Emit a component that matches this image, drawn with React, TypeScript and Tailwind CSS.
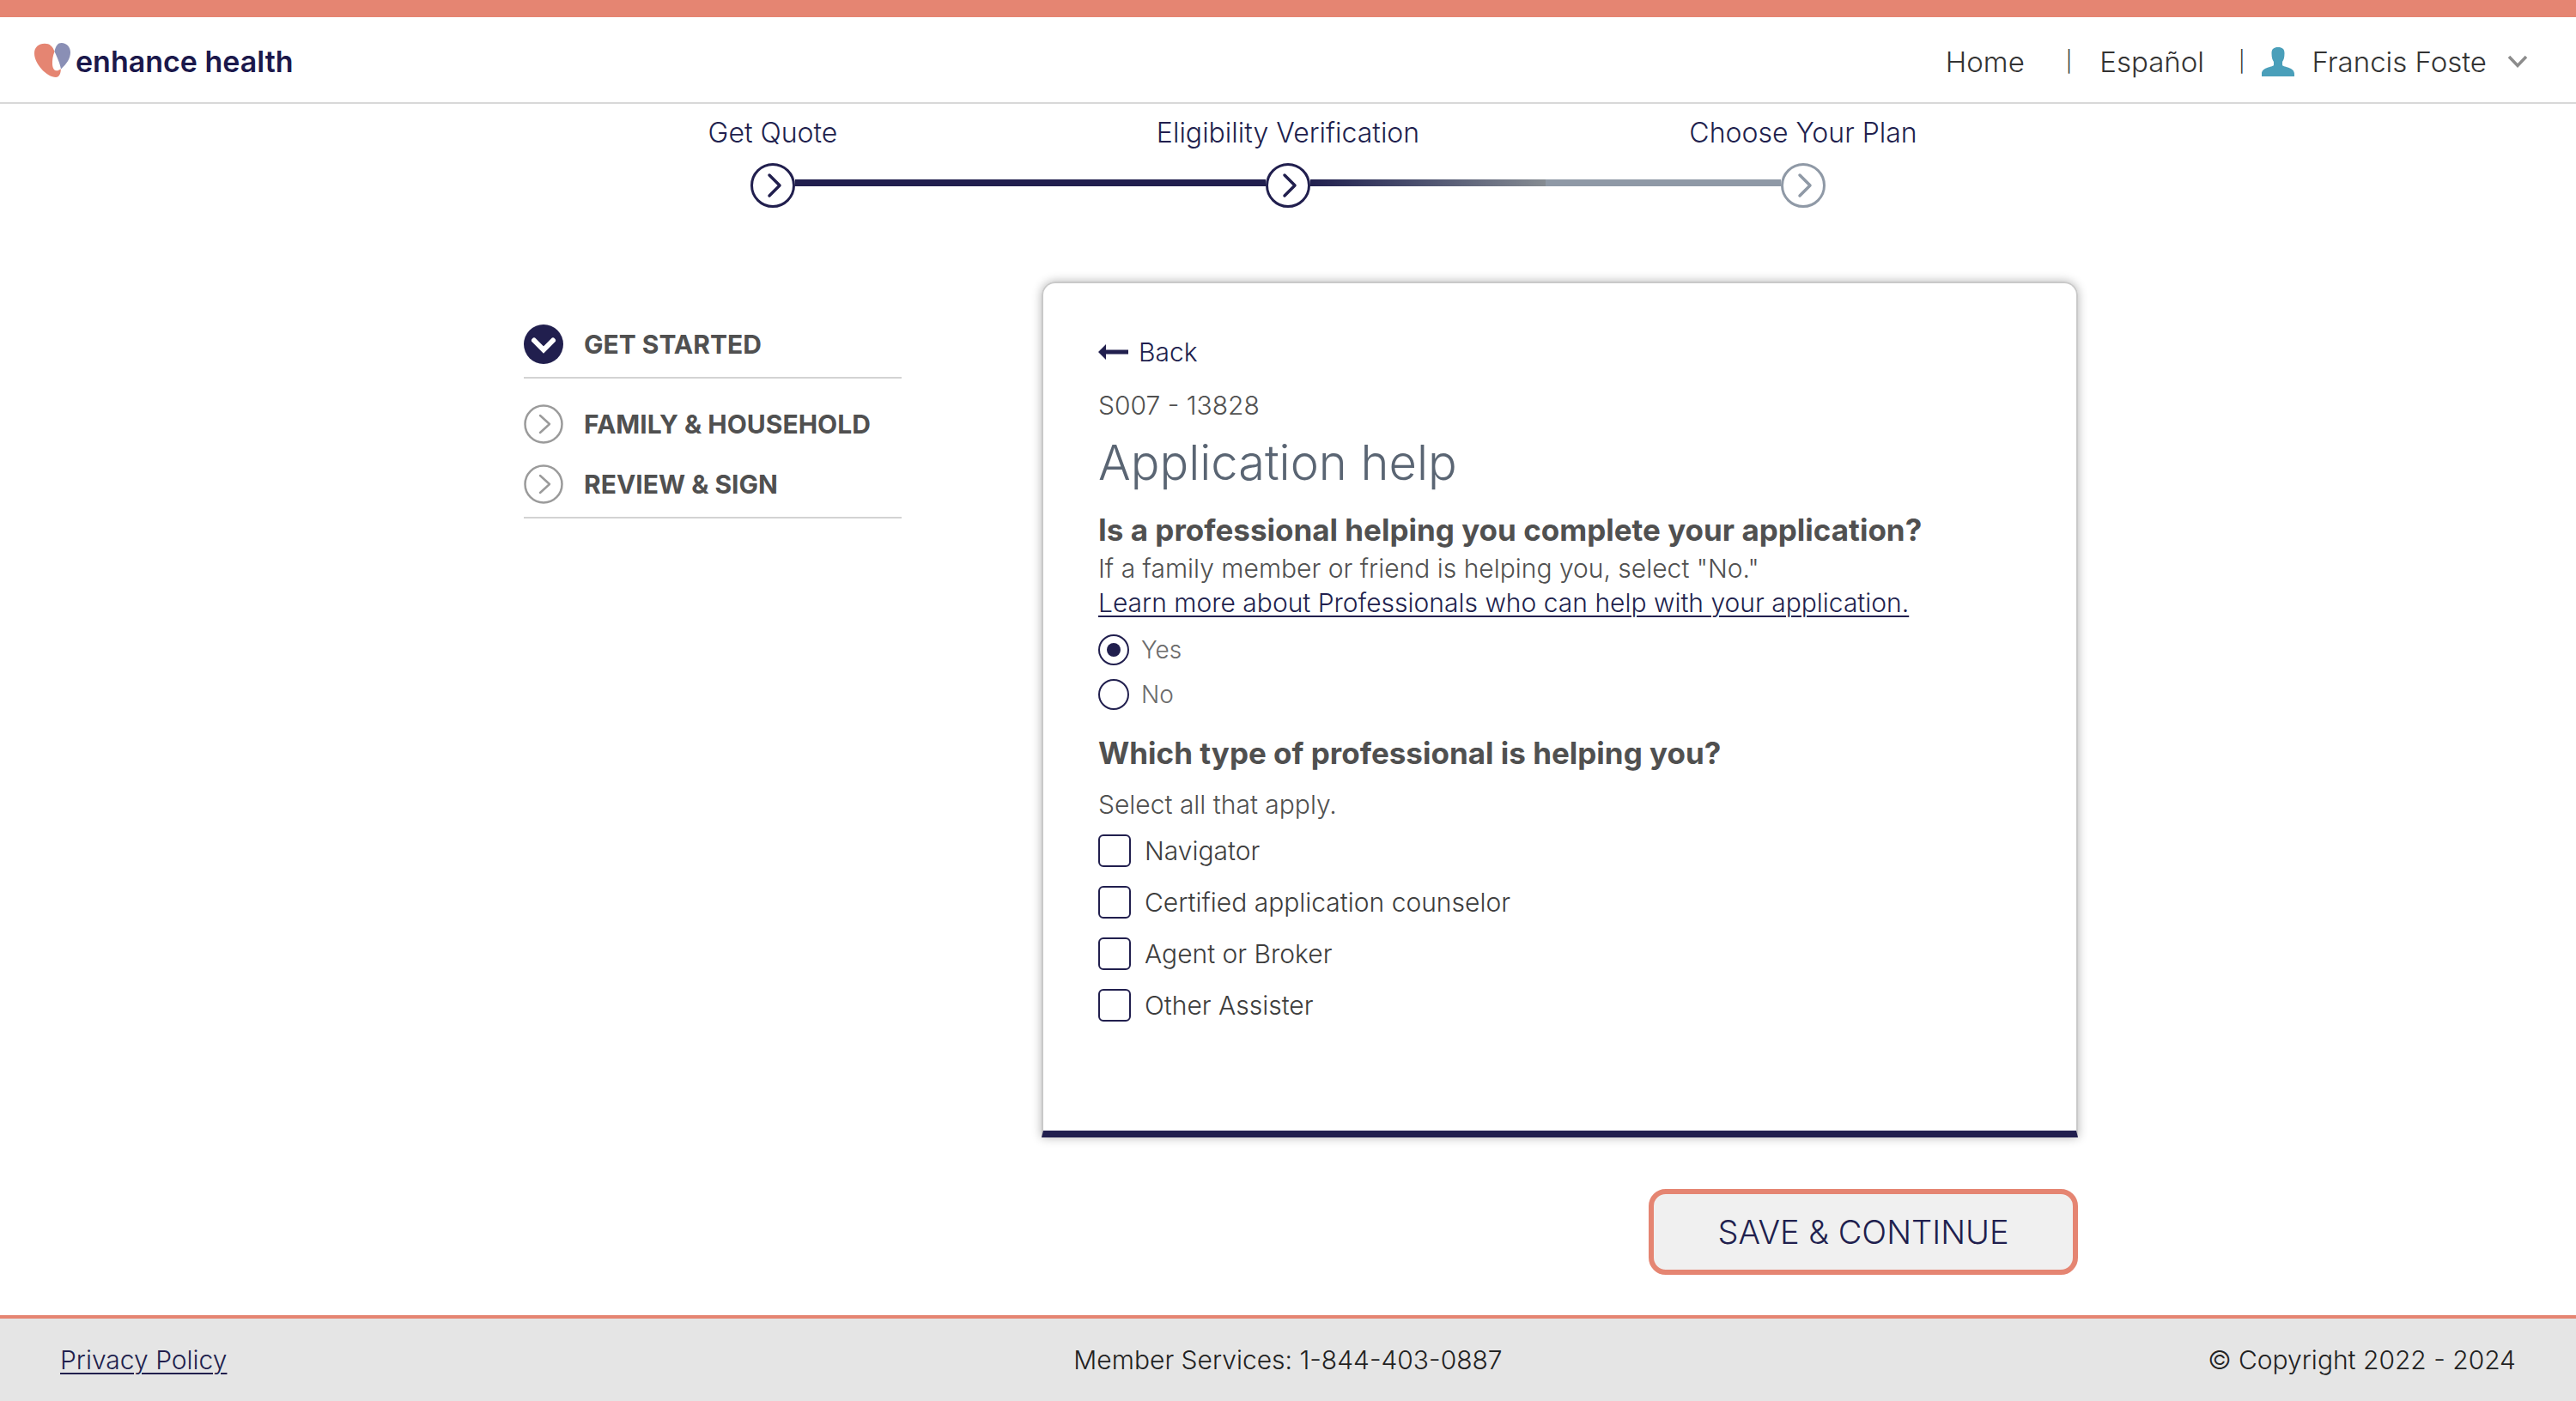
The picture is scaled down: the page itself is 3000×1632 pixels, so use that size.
import type { ReactNode } from "react";

const NAVY = "#211f4e";

function Logo() {
  return (
    <a href="#home" className="flex items-center gap-1.5">
      <svg viewBox="0 0 42 40" className="h-10 w-[42px]" aria-hidden="true">
        <path
          fill="#e58572"
          d="M0 12C0 5 5 .7 12 .7C18 .7 21.500 4 23.500 10C21.500 15 20.800 20 21 25C21.300 29.500 23 32.300 26 32.300C28 32.300 29.500 31 30.800 30.200C31 35 29 40 25 40C20 40 13 36 8 30C3 24 0 18 0 12Z"
        />
        <path fill="#8a8fb5" d="M23.500 10C25 3 27.500 0 31.500 0C38 0 42 5 42 11C42 18 38 24 31 30.500C29.500 23 27 18 23.500 10Z" />
      </svg>
      <span className="mt-1 text-[34px] leading-10 font-semibold text-[#1b184b]">enhance health</span>
    </a>
  );
}

function Header() {
  return (
    <header className="border-t-[20px] border-b-2 border-t-[#e58572] border-b-[#d8d8d8]">
      <div className="flex h-[99px] items-center justify-between pr-14 pl-10">
        <Logo />
        <nav className="flex items-center pt-1 text-[33px] leading-10 font-light text-[#333]">
          <a href="#home">Home</a>
          <span className="mr-8 ml-12 text-2xl">|</span>
          <a href="#espanol">Español</a>
          <span className="ml-10 text-2xl">|</span>
          <button type="button" className="ml-5 flex items-center">
            <svg viewBox="0 0 38 34" className="h-[34px] w-[38px]" aria-hidden="true">
              <path
                fill="#4a9fba"
                d="M19 0C24 0 26.500 2 26.500 7C26.500 12 25.500 15 24 17V21C26 23.500 38 23 38 31V34H0V31C0 23 12 23.500 14 21V17C12.500 15 11.500 12 11.500 7C11.500 2 14 0 19 0Z"
              />
            </svg>
            <span className="ml-5">Francis Foste</span>
            <svg viewBox="0 0 24 16" className="ml-6 h-4 w-6" fill="none" stroke="#8c8c8c" strokeWidth="3.500" aria-hidden="true">
              <path d="M2 2L12 12.500L22 2" />
            </svg>
          </button>
        </nav>
      </div>
    </header>
  );
}

function Step({ label, left, right, color }: { label: string; left: string; right: string; color: string }) {
  return (
    <li className="flex flex-col items-center gap-[15px]">
      <span className="text-[32px] leading-10 font-light text-[#211f4e]">{label}</span>
      <div className="flex w-full items-center">
        <div className={`mb-1.5 h-2 flex-1 ${left}`} />
        <svg viewBox="0 0 52 52" className="size-[52px]" fill="none" stroke={color} aria-hidden="true">
          <circle cx="26" cy="26" r="24.500" strokeWidth="3" />
          <path d="M22 14L34 26L22 38" strokeWidth="3.500" strokeLinecap="round" strokeLinejoin="round" />
        </svg>
        <div className={`mb-1.5 h-2 flex-1 ${right}`} />
      </div>
    </li>
  );
}

function SideItem({ label, open }: { label: string; open?: boolean }) {
  return (
    <a href="#section" className="flex items-center gap-6">
      <svg viewBox="0 0 46 46" className="size-[46px]" fill="none" strokeLinecap="round" aria-hidden="true">
        {open ? (
          <>
            <circle cx="23" cy="23" r="23" fill={NAVY} />
            <path d="M12 18.500L23 29.500L34 18.500" stroke="#fff" strokeWidth="6" />
          </>
        ) : (
          <>
            <circle cx="23" cy="23" r="21.500" stroke="#9b9b9b" strokeWidth="2.500" />
            <path d="M19 13L30 23L19 33" stroke="#9b9b9b" strokeWidth="2.500" strokeLinejoin="round" />
          </>
        )}
      </svg>
      <span className="text-[30px] leading-10 font-bold text-[#505050]">{label}</span>
    </a>
  );
}

function Radio({ label, checked }: { label: string; checked?: boolean }) {
  return (
    <label className="flex items-center gap-3.5 text-[28px] leading-10 font-light text-[#6b6b6b]">
      <input
        type="radio"
        name="professional"
        defaultChecked={checked}
        className="grid size-9 appearance-none place-content-center rounded-full border-2 border-[#211f4e] before:size-4 before:rounded-full checked:before:bg-[#211f4e]"
      />
      {label}
    </label>
  );
}

function Check({ label }: { label: string }) {
  return (
    <label className="flex items-center gap-4 text-[30px] leading-10 font-light text-[#3d3d3d]">
      <input type="checkbox" className="size-[38px] appearance-none rounded-md border-2 border-[#211f4e] checked:bg-[#211f4e]" />
      {label}
    </label>
  );
}

function Question({ children }: { children: ReactNode }) {
  return <h2 className="text-[35px] leading-10 font-bold text-[#505050]">{children}</h2>;
}

export default function App() {
  return (
    <div className="flex min-h-screen flex-col bg-white font-['Inter',sans-serif]">
      <Header />

      <ol className="mx-auto mt-3.5 grid w-full max-w-[1800px] grid-cols-3">
        <Step label="Get Quote" left="bg-transparent" right="bg-[#211f4e]" color={NAVY} />
        <Step label="Eligibility Verification" left="bg-[#211f4e]" right="bg-linear-to-r from-[#211f4e] to-[#868c92]" color={NAVY} />
        <Step label="Choose Your Plan" left="bg-[#8f99a6]" right="bg-transparent" color="#8f99a6" />
      </ol>

      <main className="mx-auto mt-[86px] mb-[47px] flex w-full max-w-[1840px] items-start pl-[30px]">
        <aside className="w-[440px] shrink-0 pt-[50px]">
          <div className="border-b-2 border-[#d3d3d3] pb-[15px]">
            <SideItem label="GET STARTED" open />
          </div>
          <div className="mt-[30px] flex flex-col gap-6 border-b-2 border-[#d3d3d3] pb-[15px]">
            <SideItem label="FAMILY & HOUSEHOLD" />
            <SideItem label="REVIEW & SIGN" />
          </div>
        </aside>

        <form className="ml-[163px] flex flex-1 flex-col">
          <section className="flex flex-col items-start rounded-t-2xl border-2 border-b-8 border-[#c9c9c9] border-b-[#211f4e] px-16 pt-[60px] pb-[126px] text-[30px] leading-10 font-light text-[#505050] shadow-[0_0_12px_rgba(0,0,0,0.3)]">
            <a href="#back" className="flex items-center gap-3 text-[#211f4e]">
              <svg viewBox="0 0 35 18" className="h-[18px] w-[35px]" fill={NAVY} aria-hidden="true">
                <path d="M0 9L9 0V6.500H35V11.500H9V18Z" />
              </svg>
              Back
            </a>
            <p className="mt-[22px]">S007 - 13828</p>
            <h1 className="mt-[15px] text-[56px] leading-16 text-[#5a6573]">Application help</h1>

            <div className="mt-[26px]">
              <Question>Is a professional helping you complete your application?</Question>
            </div>
            <p className="mt-[5px]">If a family member or friend is helping you, select "No."</p>
            <a href="#learn" className="text-[#211f4e] underline decoration-2 underline-offset-4">
              Learn more about Professionals who can help with your application.
            </a>
            <div className="mt-[15px] flex flex-col gap-3">
              <Radio label="Yes" checked />
              <Radio label="No" />
            </div>

            <div className="mt-7">
              <Question>Which type of professional is helping you?</Question>
            </div>
            <p className="mt-5">Select all that apply.</p>
            <div className="mt-3.5 flex flex-col gap-5">
              <Check label="Navigator" />
              <Check label="Certified application counselor" />
              <Check label="Agent or Broker" />
              <Check label="Other Assister" />
            </div>
          </section>

          <button
            type="button"
            className="mt-[60px] w-[500px] self-end rounded-[20px] border-6 border-[#e58572] bg-[#f0f0f0] py-5 text-[38px] leading-12 font-light text-[#211f4e]"
          >
            SAVE &amp; CONTINUE
          </button>
        </form>
      </main>

      <footer className="mt-auto grid h-[100px] grid-cols-3 items-center border-t-4 border-[#e58572] bg-[#e5e5e5] px-[70px] text-[30px] leading-10 font-light text-[#222]">
        <a href="#privacy" className="justify-self-start text-[#211f4e] underline decoration-2 underline-offset-4">
          Privacy Policy
        </a>
        <span className="justify-self-center">Member Services: 1-844-403-0887</span>
        <span className="justify-self-end">© Copyright 2022 - 2024</span>
      </footer>
    </div>
  );
}
